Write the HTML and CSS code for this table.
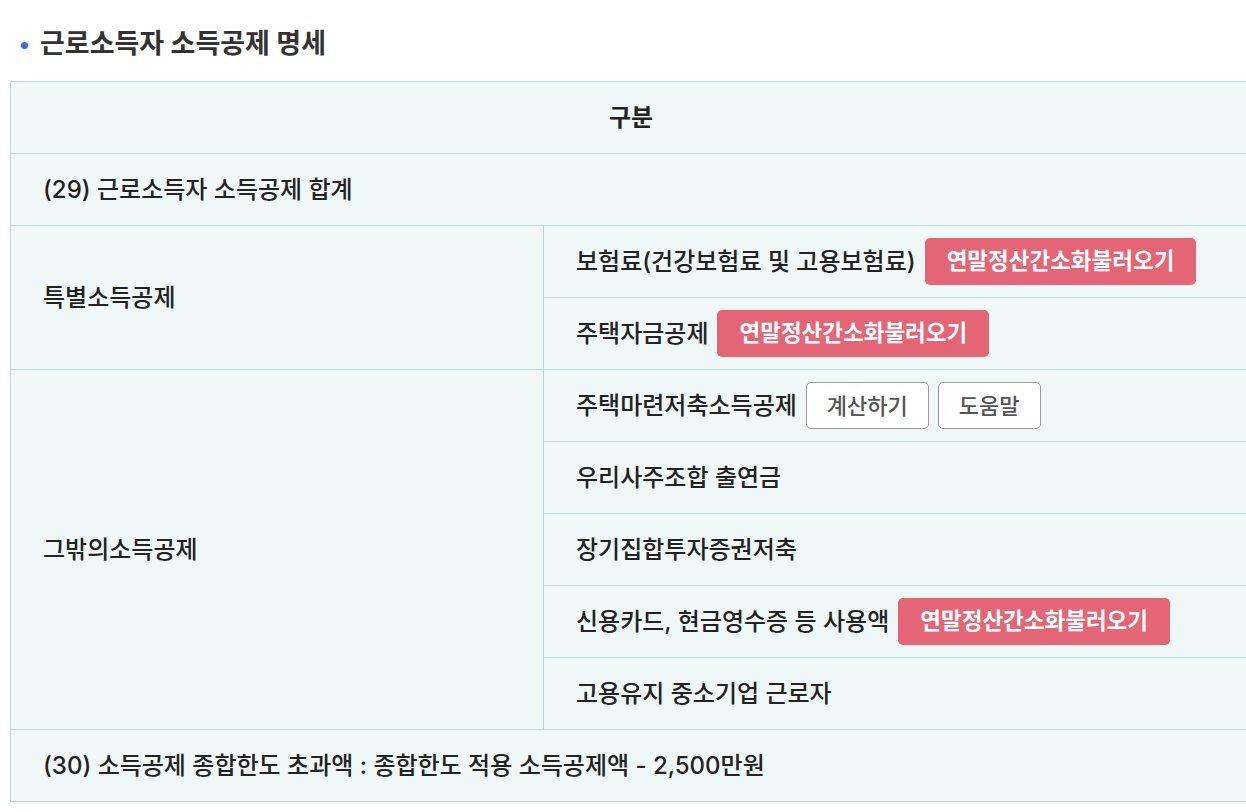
FILE: index.html
```html
<!DOCTYPE html>
<html lang="ko">
<head>
<meta charset="utf-8">
<title>근로소득자 소득공제 명세</title>
<link rel="stylesheet" href="styles.css">
</head>
<body>
<div class="page">
  <h2 class="title"><span class="dot"></span>근로소득자 소득공제 명세</h2>
  <table class="grid">
    <colgroup><col class="c1"><col class="c2"></colgroup>
    <tr><th colspan="2">구분</th></tr>
    <tr><td colspan="2">(29) 근로소득자 소득공제 합계</td></tr>
    <tr>
      <td rowspan="2" class="group">특별소득공제</td>
      <td><div class="line">보험료(건강보험료 및 고용보험료)<button class="btn red">연말정산간소화불러오기</button></div></td>
    </tr>
    <tr><td><div class="line">주택자금공제<button class="btn red">연말정산간소화불러오기</button></div></td></tr>
    <tr>
      <td rowspan="5" class="group">그밖의소득공제</td>
      <td><div class="line">주택마련저축소득공제<button class="btn gray">계산하기</button><button class="btn gray">도움말</button></div></td>
    </tr>
    <tr><td>우리사주조합 출연금</td></tr>
    <tr><td>장기집합투자증권저축</td></tr>
    <tr><td><div class="line">신용카드, 현금영수증 등 사용액<button class="btn red">연말정산간소화불러오기</button></div></td></tr>
    <tr><td>고용유지 중소기업 근로자</td></tr>
    <tr><td colspan="2">(30) 소득공제 종합한도 초과액 : 종합한도 적용 소득공제액 - 2,500만원</td></tr>
  </table>
</div>
</body>
</html>
```

FILE: styles.css
```css
html, body {
  margin: 0;
  padding: 0;
  background: #ffffff;
  overflow: hidden;
}
.page {
  width: 1246px;
  overflow: hidden;
  padding-left: 10px;
  box-sizing: border-box;
  font-family: "Inter", "Noto Sans CJK KR", "Noto Sans", sans-serif;
  color: #222222;
}
.title {
  margin: 0;
  padding-top: 27px;
  height: 34px;
  line-height: 34px;
  margin-bottom: 20px;
  font-size: 27px;
  font-weight: 700;
  color: #333333;
  display: flex;
  align-items: center;
}
.dot {
  width: 7px;
  height: 7px;
  border-radius: 50%;
  background: #3d6ee0;
  margin-left: 11px;
  margin-right: 12px;
  margin-top: 2px;
}
.grid {
  width: 1242px;
  border-collapse: collapse;
  background: #eff7f7;
  font-size: 24px;
}
.c1 { width: 533px; }
.grid th, .grid td {
  border: 1px solid #bcd7db;
  height: 72px;
  padding: 0 0 0 32px;
  box-sizing: border-box;
  text-align: left;
  vertical-align: middle;
  font-weight: 500;
  line-height: 30px;
}
.grid th {
  text-align: center;
  font-weight: 700;
  padding: 0;
}
.line {
  display: flex;
  align-items: center;
  gap: 9px;
}
.btn {
  font-family: inherit;
  font-size: 22px;
  height: 47px;
  padding: 0 20px;
  border-radius: 5px;
  cursor: pointer;
  line-height: 1;
}
.btn.red {
  background: #e46575;
  color: #ffffff;
  border: none;
  font-weight: 700;
  font-size: 22.5px;
  padding: 0 22px;
}
.btn.gray {
  background: #ffffff;
  color: #555555;
  border: 1px solid #9a9a9a;
  font-weight: 500;
}
```
